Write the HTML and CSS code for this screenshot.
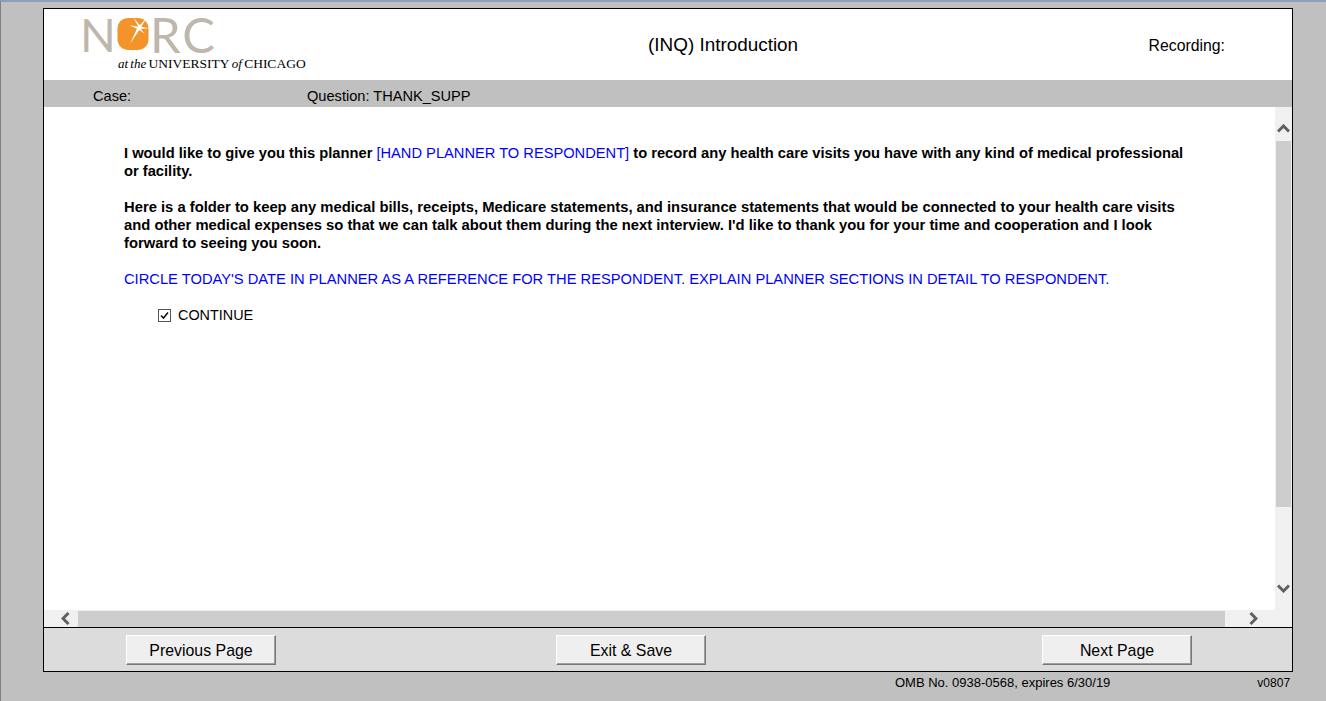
FILE: index.html
```html
<!DOCTYPE html>
<html lang="en">
<head>
<meta charset="utf-8">
<title>NORC - Introduction</title>
<link rel="stylesheet" href="styles.css">
</head>
<body>
<div class="page">
  <div class="frame">
    <header class="header">
      <div class="logo">
        <div class="logo-word">
          <span>N</span>
          <svg class="sun" width="32" height="34" viewBox="0 0 33 34">
            <path d="M12 0.5H21C28 0.5 32.5 5 32.5 12V22C32.5 29 28 33.5 21 33.5H12C5 33.5 0.5 29 0.5 22V12C0.5 5 5 0.5 12 0.5Z" fill="#f2942a"/>
            <path d="M22 9.5L17 0L23.5 8L31 0L25 9.5L33 11L24.5 11.8L29 17L23 12.8L13.5 27L20.5 11.5L13 8L21 9.2Z" fill="#fff"/>
          </svg>
          <span class="rc">RC</span>
        </div>
        <div class="logo-sub"><i>at the</i> <span class="uni">UNIVERSITY</span> <i>of</i> <span class="uni">CHICAGO</span></div>
      </div>
      <div class="title">(INQ) Introduction</div>
      <div class="recording">Recording:</div>
    </header>
    <div class="band">
      <span class="case">Case:</span>
      <span class="question">Question: THANK_SUPP</span>
    </div>
    <div class="body-area">
      <main class="content">
        <p class="q q-first">I would like to give you this planner <span class="blue">[HAND PLANNER TO RESPONDENT]</span> to record any health care visits you have with any kind of medical professional or facility.</p>
        <p class="q">Here is a folder to keep any medical bills, receipts, Medicare statements, and insurance statements that would be connected to your health care visits and other medical expenses so that we can talk about them during the next interview. I'd like to thank you for your time and cooperation and I look forward to seeing you soon.</p>
        <p class="note blue">CIRCLE TODAY'S DATE IN PLANNER AS A REFERENCE FOR THE RESPONDENT. EXPLAIN PLANNER SECTIONS IN DETAIL TO RESPONDENT.</p>
        <div class="option">
          <svg class="check" width="13" height="13" viewBox="0 0 13 13">
            <rect x="0.5" y="0.5" width="12" height="12" fill="#fff" stroke="#555"/>
            <path d="M3 6.5L5.5 9L10 3.5" fill="none" stroke="#111" stroke-width="1.6"/>
          </svg>
          <span>CONTINUE</span>
        </div>
      </main>
      <div class="vscroll">
        <svg class="arrow" width="13" height="9" viewBox="0 0 13 9"><path d="M1 7.5L6.5 2L12 7.5" fill="none" stroke="#606060" stroke-width="3"/></svg>
        <div class="vthumb"></div>
        <svg class="arrow" width="13" height="9" viewBox="0 0 13 9"><path d="M1 1.5L6.5 7L12 1.5" fill="none" stroke="#606060" stroke-width="3"/></svg>
      </div>
      <div class="hscroll">
        <svg class="harrow-l" width="9" height="13" viewBox="0 0 9 13"><path d="M7.5 1L2 6.5L7.5 12" fill="none" stroke="#606060" stroke-width="3"/></svg>
        <div class="hthumb"></div>
        <svg class="harrow-r" width="9" height="13" viewBox="0 0 9 13"><path d="M1.5 1L7 6.5L1.5 12" fill="none" stroke="#606060" stroke-width="3"/></svg>
      </div>
    </div>
    <footer class="footer">
      <button class="btn">Previous Page</button>
      <button class="btn">Exit &amp; Save</button>
      <button class="btn btn-next">Next Page</button>
    </footer>
  </div>
  <div class="status">
    <span class="omb">OMB No. 0938-0568, expires 6/30/19</span>
    <span class="version">v0807</span>
  </div>
</div>
</body>
</html>
```
FILE: styles.css
```css
* { box-sizing: border-box; }
html, body { margin: 0; padding: 0; height: 100%; overflow: hidden; }
body { font-family: "Liberation Sans", Arial, sans-serif; color: #000; background: #c0c0c0; }
.page {
  height: 701px;
  border-top: 2px solid #8c9fb8;
  border-left: 1px solid #808080;
  padding: 6px 33px 0 42px;
}
.frame {
  width: 1250px;
  height: 664px;
  border: 1px solid #000;
  display: flex;
  flex-direction: column;
  background: #fff;
}
.header {
  height: 71px;
  display: flex;
  align-items: flex-start;
  background: #fff;
  padding-left: 39px;
}
.logo { width: 223px; }
.logo-word {
  display: flex;
  align-items: center;
  height: 34px;
  margin: 8px 0 0 -3px;
  font-family: "Lato", "Liberation Sans", sans-serif;
  font-weight: 400;
  font-size: 47px;
  line-height: 34px;
  color: #bfb6ac;
}
.sun { margin: 0 1px 0 1px; }
.rc { font-size: 49px; letter-spacing: 2px; }
.logo-sub {
  margin-top: 5px;
  padding-left: 35px;
  font-family: "Liberation Serif", serif;
  font-size: 13px;
  line-height: 15px;
  white-space: nowrap;
  word-spacing: -1px;
}
.uni { font-size: 13.5px; }
.title { margin: 25px 0 0 342px; font-size: 18.9px; line-height: 22px; white-space: nowrap; }
.recording { margin: 28px 67px 0 auto; font-size: 15.8px; line-height: 18px; }
.band {
  height: 27px;
  background: #c0c0c0;
  display: flex;
  align-items: center;
  padding: 5px 0 0 49px;
  font-size: 14.6px;
}
.case { width: 214px; }
.body-area {
  height: 520px;
  display: grid;
  grid-template-columns: 1231px 17px;
  grid-template-rows: 503px 17px;
}
.content { padding: 37px 80px 0 80px; background: #fff; font-size: 14.67px; line-height: 18px; overflow: hidden; }
.q { margin: 0 0 18px; font-weight: bold; font-size: 14.79px; }
.q-first { font-size: 14.71px; }
.q .blue { font-weight: normal; font-size: 14.67px; }
.blue { color: #0000ff; }
.note { margin: 0 0 18px; font-size: 14.71px; }
.option { display: flex; align-items: center; gap: 7px; padding-left: 34px; font-size: 14.4px; }
.vscroll {
  grid-column: 2;
  grid-row: 1 / 3;
  background: #f0f0f0;
  display: flex;
  flex-direction: column;
  align-items: center;
  padding-top: 17px;
}
.arrow { flex: none; }
.vthumb { width: 15px; height: 366px; margin: 8px 0 77px; background: #cdcdcd; }
.hscroll {
  grid-column: 1;
  grid-row: 2;
  background: #f0f0f0;
  display: flex;
  align-items: center;
  padding-left: 17px;
}
.hthumb { width: 1147px; height: 16px; margin: 1px 24px 0 8px; background: #cdcdcd; }
.footer {
  flex: 1;
  background: #dcdcdc;
  border-top: 1px solid #000;
  display: flex;
  align-items: flex-start;
  padding: 7px 0 0 82px;
  gap: 280px;
}
.btn {
  width: 150px;
  height: 30px;
  padding: 2px 0 0;
  background: #efefef;
  border: 1px solid;
  border-color: #fff #777 #777 #fff;
  box-shadow: -1px -1px 0 #a0a0a0 inset;
  font-family: "Liberation Sans", Arial, sans-serif;
  font-size: 15.9px;
  color: #000;
}
.btn-next { margin-left: 56px; }
.status {
  display: flex;
  align-items: baseline;
  padding: 4px 0 0 852px;
  font-size: 12px;
  line-height: 14px;
}
.omb { font-size: 13px; }
.version { margin-left: 147px; }
```
